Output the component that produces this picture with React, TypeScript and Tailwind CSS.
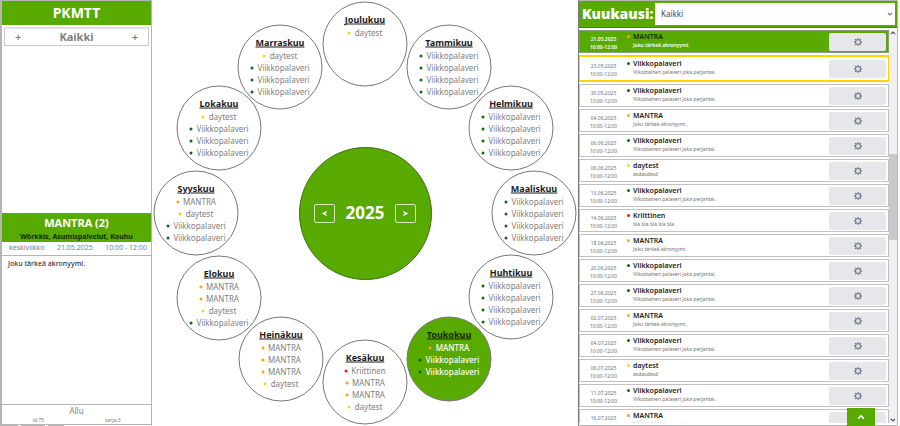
import React from "react";

type Kind = "green" | "orange" | "yellow" | "red";
type Entry = { name: string; kind: Kind };

const dotColor: Record<Kind, string> = {
  green: "bg-[#0b6b12]",
  orange: "bg-[#ff9f1a]",
  yellow: "bg-[#ffd21c]",
  red: "bg-[#f01818]",
};

const weekly: Entry = { name: "Viikkopalaveri", kind: "green" };
const mantra: Entry = { name: "MANTRA", kind: "orange" };
const daytest: Entry = { name: "daytest", kind: "yellow" };
const critical: Entry = { name: "Kriittinen", kind: "red" };

const months: { name: string; entries: Entry[]; current?: boolean }[] = [
  { name: "Joulukuu", entries: [daytest] },
  { name: "Tammikuu", entries: [weekly, weekly, weekly, weekly] },
  { name: "Helmikuu", entries: [weekly, weekly, weekly, weekly] },
  { name: "Maaliskuu", entries: [weekly, weekly, weekly, weekly] },
  { name: "Huhtikuu", entries: [weekly, weekly, weekly, weekly] },
  { name: "Toukokuu", entries: [mantra, weekly, weekly], current: true },
  { name: "Kesäkuu", entries: [critical, mantra, mantra, daytest] },
  { name: "Heinäkuu", entries: [mantra, mantra, mantra, daytest] },
  { name: "Elokuu", entries: [mantra, mantra, daytest, weekly] },
  { name: "Syyskuu", entries: [mantra, daytest, weekly, weekly] },
  { name: "Lokakuu", entries: [daytest, weekly, weekly, weekly] },
  { name: "Marraskuu", entries: [daytest, weekly, weekly, weekly] },
];

const descriptions: Record<string, string> = {
  Viikkopalaveri: "Viikottainen palaveri joka perjantai.",
  MANTRA: "Joku tärkeä akronyymi.",
  daytest: "asdasdasd",
  Kriittinen: "bla bla bla bla bla",
};

const events: { date: string; entry: Entry; state?: "selected" | "next" }[] = [
  { date: "21.05.2025", entry: mantra, state: "selected" },
  { date: "23.05.2025", entry: weekly, state: "next" },
  { date: "30.05.2025", entry: weekly },
  { date: "04.06.2025", entry: mantra },
  { date: "06.06.2025", entry: weekly },
  { date: "06.06.2025", entry: daytest },
  { date: "13.06.2025", entry: weekly },
  { date: "14.06.2025", entry: critical },
  { date: "18.06.2025", entry: mantra },
  { date: "20.06.2025", entry: weekly },
  { date: "27.06.2025", entry: weekly },
  { date: "02.07.2025", entry: mantra },
  { date: "04.07.2025", entry: weekly },
  { date: "06.07.2025", entry: daytest },
  { date: "11.07.2025", entry: weekly },
  { date: "16.07.2025", entry: mantra },
];

function Gear() {
  return (
    <svg viewBox="0 0 16 16" className="size-2 text-[#6b7280]" fill="none" stroke="currentColor" aria-hidden="true">
      <circle cx="8" cy="8" r="4.8" strokeWidth="2" />
      <path
        d="M8 0.3v3M8 12.7v3M0.3 8h3M12.7 8h3M2.3 2.3l2.1 2.1M11.6 11.6l2.1 2.1M2.3 13.7l2.1-2.1M11.6 4.4l2.1-2.1"
        strokeWidth="2.6"
      />
    </svg>
  );
}

function Chevron({ up = false, className }: { up?: boolean; className: string }) {
  return (
    <svg viewBox="0 0 10 10" className={className} fill="none" stroke="currentColor" aria-hidden="true">
      <path d={up ? "M1.5 7L5 3.5L8.5 7" : "M1.5 3L5 6.5L8.5 3"} strokeWidth="2" />
    </svg>
  );
}

function Sidebar() {
  return (
    <aside className="flex w-[152px] shrink-0 flex-col border-x border-t border-[#b5b5b5] border-l-2">
      <h1 className="bg-[#58a900] text-center text-[14px] leading-6 font-bold text-white">PKMTT</h1>
      <div className="mx-0.5 mt-0.5 flex h-[19px] items-center justify-between border border-t-2 border-[#c9c9c9] border-t-[#e2e2e2] px-2.5 text-[#808080]">
        <button type="button" aria-label="Edellinen ryhmä" className="text-[11px] leading-3 font-semibold">+</button>
        <span className="text-[11px] leading-4 font-bold">Kaikki</span>
        <button type="button" aria-label="Seuraava ryhmä" className="text-[11px] leading-3 font-semibold">+</button>
      </div>
      <div className="flex-1" />
      <div className="bg-[#58a900] pt-0.5 text-center">
        <h2 className="text-[11px] leading-4 font-bold text-white">MANTRA (2)</h2>
        <p className="text-[7px] leading-[11px] font-bold text-[#172800]">Wörkkis, Asumispalvelut, Kouhu</p>
      </div>
      <div className="flex h-3.5 items-center justify-between border-b border-[#b5b5b5] pr-1 pl-[7px] text-[7px] text-[#808080]">
        <span>keskiviikko</span>
        <span>21.05.2025</span>
        <span>10:00 - 12:00</span>
      </div>
      <p className="h-[148px] px-1.5 pt-[3px] text-[7px] leading-[10px] font-medium text-[#333333]">Joku tärkeä akronyymi.</p>
      <div className="border-y border-[#b5b5b5] text-center text-[#808080]">
        <p className="pt-px text-[8px] leading-[10px]">Allu</p>
        <div className="flex justify-around text-[5px] leading-2">
          <span>id:75</span>
          <span>sarja:3</span>
        </div>
      </div>
      <div className="flex h-px gap-[3px]">
        <span className="w-4 bg-[#b5b5b5]" />
        <span className="w-6 bg-[#b5b5b5]" />
        <span className="w-4 bg-[#b5b5b5]" />
      </div>
    </aside>
  );
}

function Month({ name, entries, current, index }: { name: string; entries: Entry[]; current?: boolean; index: number }) {
  const angle = (index * Math.PI) / 6;
  const x = Math.round(169 * Math.sin(angle));
  const y = Math.round(-169 * Math.cos(angle));
  return (
    <section
      className={`absolute flex size-[85px] -translate-1/2 flex-col items-center rounded-full border border-[#777777] pt-[11px] ${
        current ? "bg-[#58a900] text-white" : "bg-white text-[#808080]"
      }`}
      style={{ left: `calc(50% + ${x}px)`, top: `calc(50% + ${y}px)` }}
    >
      <h3 className={`pb-px text-[9px] leading-3 font-bold underline ${current ? "text-[#172800]" : "text-[#1c1c1c]"}`}>{name}</h3>
      <ul className="flex flex-col items-center">
        {entries.map((entry, i) => (
          <li
            key={i}
            className={`flex items-center gap-1 text-[8px] leading-3 whitespace-nowrap ${current ? "font-medium" : ""}`}
          >
            <span className={`size-[3px] rounded-full ${dotColor[entry.kind]}`} />
            {entry.name}
          </li>
        ))}
      </ul>
    </section>
  );
}

function YearWheel() {
  return (
    <main className="relative min-w-[426px] flex-1">
      <div className="flex h-full items-center justify-center">
        <div className="flex size-[133px] items-center justify-center gap-[11px] rounded-full border border-[#3f6f10] bg-[#58a900] text-white">
          <button type="button" aria-label="Edellinen vuosi" className="flex h-[19px] w-[21px] items-center justify-center rounded-xs border border-[#d5e8bf]">
            <svg viewBox="0 0 10 10" className="size-[7px]" fill="currentColor" aria-hidden="true">
              <path d="M9 1L1 5L9 9L6.5 5Z" />
            </svg>
          </button>
          <span className="text-[17px] leading-5 font-bold">2025</span>
          <button type="button" aria-label="Seuraava vuosi" className="flex h-[19px] w-[21px] items-center justify-center rounded-xs border border-[#d5e8bf]">
            <svg viewBox="0 0 10 10" className="size-[7px]" fill="currentColor" aria-hidden="true">
              <path d="M1 1L9 5L1 9L3.5 5Z" />
            </svg>
          </button>
        </div>
      </div>
      {months.map((month, i) => (
        <Month key={month.name} index={i} {...month} />
      ))}
    </main>
  );
}

function EventRow({ date, entry, state }: (typeof events)[number]) {
  const frame =
    state === "selected"
      ? "h-[23px] border border-[#8b9b7b] bg-[#58a900] text-white font-semibold"
      : state === "next"
        ? "h-[27px] border-y-2 border-r border-l border-[#ffd400] text-[#707070]"
        : "h-[23px] border border-[#c0c0c0] text-[#707070]";
  return (
    <li className={`flex shrink-0 items-center pr-0.5 ${frame}`}>
      <div className="w-[47px] pt-0.5 text-center text-[5px] leading-2">
        <p>{date}</p>
        <p>10:00-12:00</p>
      </div>
      <div className="flex-1 pb-0.5">
        <div className="flex items-center gap-[3px]">
          <span className={`size-[3px] rounded-full ${dotColor[entry.kind]}`} />
          <h3 className={`text-[7px] leading-[9px] font-semibold ${state === "selected" ? "text-[#172800]" : "text-[#222222]"}`}>{entry.name}</h3>
        </div>
        <p className="pl-1.5 text-[5px] leading-[9px]">{descriptions[entry.name]}</p>
      </div>
      <button type="button" aria-label={`Asetukset: ${entry.name} ${date}`} className="flex h-[18px] w-[57px] items-center justify-center rounded-xs bg-[#e7e7eb]">
        <Gear />
      </button>
    </li>
  );
}

function EventPanel() {
  return (
    <section className="relative mr-[3px] flex w-[320px] shrink-0 flex-col border border-[#b5b5b5] border-l-[#777777]">
      <div className="flex h-[27px] shrink-0 items-center border-b border-[#468600] bg-[#58a900] pr-0.5 pl-[3px]">
        <label htmlFor="month" className="w-[73px] shrink-0 font-['Open_Sans','Noto_Sans',sans-serif] text-[14px] leading-5 font-extrabold whitespace-nowrap text-white">Kuukausi:</label>
        <div className="relative min-w-0 flex-1">
          <select id="month" className="block h-[22px] w-full appearance-none bg-white pl-1.5 text-[8px] text-[#444444]">
            <option>Kaikki</option>
          </select>
          <Chevron className="pointer-events-none absolute top-2 right-0.5 size-[6px] text-[#777777]" />
        </div>
      </div>
      <div className="flex min-h-0 flex-1 pt-0.5 pb-0.5">
        <ul className="flex min-w-0 flex-1 flex-col gap-0.5 overflow-hidden">
          {events.map((event, i) => (
            <EventRow key={i} {...event} />
          ))}
        </ul>
        <div className="flex w-2 flex-col items-center bg-[#f0f0f0]">
          <Chevron up className="size-[6px] text-[#555555]" />
          <div className="flex w-full flex-1 flex-col">
            <span className="grow-2" />
            <span className="h-[86px] bg-[#c9c9c9]" />
            <span className="grow-3" />
          </div>
          <Chevron className="size-[6px] text-[#555555]" />
        </div>
      </div>
      <button type="button" aria-label="Takaisin ylös" className="absolute right-[22px] -bottom-px flex h-[18px] w-7 items-center justify-center bg-[#58a900] text-white">
        <Chevron up className="size-2" />
      </button>
    </section>
  );
}

export default function App() {
  return (
    <div className="flex h-screen min-h-[426px] bg-white font-['Noto_Sans','Open_Sans',sans-serif]">
      <Sidebar />
      <YearWheel />
      <EventPanel />
    </div>
  );
}
